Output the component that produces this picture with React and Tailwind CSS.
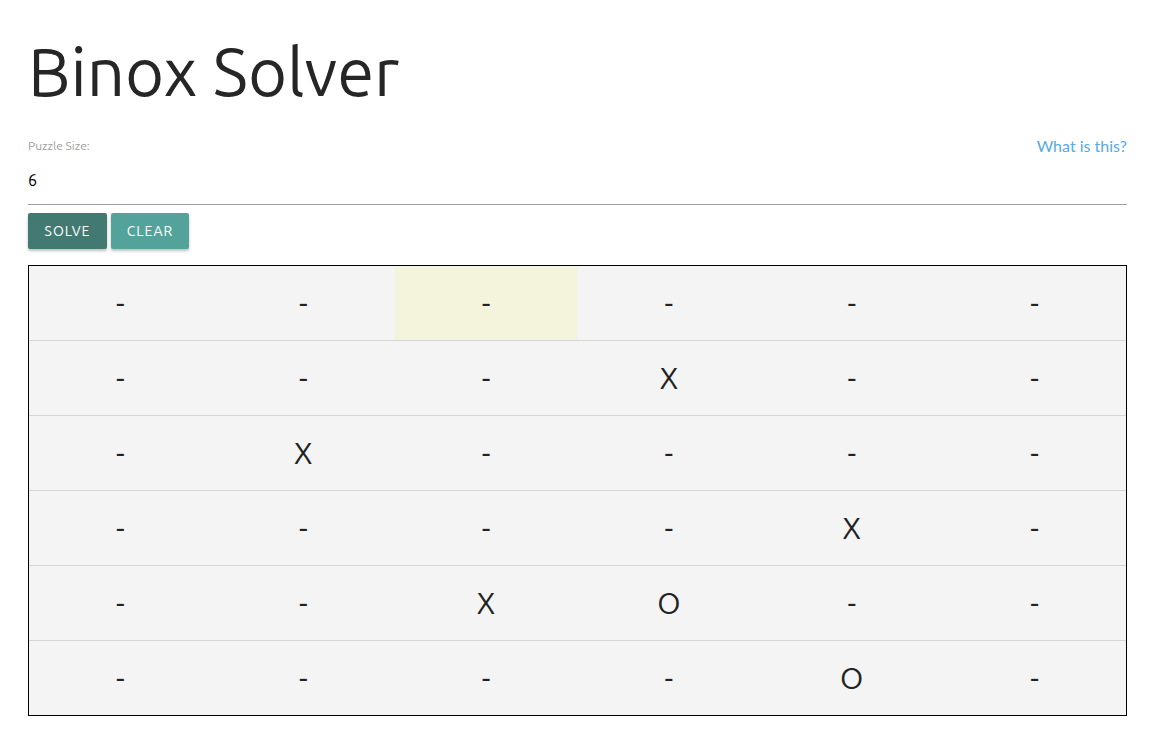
import { useState } from "react"

const initial = [
  ["", "", "", "", "", ""],
  ["", "", "", "X", "", ""],
  ["", "X", "", "", "", ""],
  ["", "", "", "", "X", ""],
  ["", "", "X", "O", "", ""],
  ["", "", "", "", "O", ""],
]

export default function App() {
  const [grid] = useState(initial)
  const [size] = useState("6")
  const [active] = useState([0, 2])

  return (
    <div className="pl-[28px] pr-[36px] pt-[26px] text-[#222] font-['Ubuntu','Lato',sans-serif]">
      {/* Header */}
      <h1 className="text-[67px] leading-[92px] text-[#262626]">Binox Solver</h1>

      {/* Size input */}
      <div className="mt-[17px] flex items-start justify-between">
        <label className="text-[12px] text-[#9e9e9e] mt-[2px]">Puzzle Size:</label>
        <a href="#" className="text-[16px] text-[#56a9e6] -mt-[1px] font-['Lato',sans-serif]">What is this?</a>
      </div>
      <div className="border-b border-[#9e9e9e] pt-[10px] pb-[12px] text-[16px] leading-[24px] text-black">{size}</div>

      {/* Actions */}
      <div className="flex gap-[4px] mt-[8px]">
        <button className="h-[36px] w-[79px] rounded-[2px] bg-[#427a71] text-white text-[14px] tracking-[1px] shadow-[0_2px_3px_rgba(0,0,0,0.25)]">SOLVE</button>
        <button className="h-[36px] w-[78px] rounded-[2px] bg-[#53a39a] text-white text-[14px] tracking-[1px] shadow-[0_2px_3px_rgba(0,0,0,0.25)]">CLEAR</button>
      </div>

      {/* Grid */}
      <div className="mt-[16px] border border-black bg-[#f4f4f4]">
        {grid.map((row, r) => (
          <div key={r} className={`grid grid-cols-6 ${r > 0 ? "h-[75px] border-t border-[#d6d6d6]" : "h-[74px]"}`}>
            {row.map((cell, c) => (
              <div
                key={c}
                className={`flex items-center justify-center text-[30px] text-[#222] ${active[0] === r && active[1] === c ? "bg-[#f4f4dc]" : ""}`}
              >
                {cell || "-"}
              </div>
            ))}
          </div>
        ))}
      </div>
    </div>
  )
}
